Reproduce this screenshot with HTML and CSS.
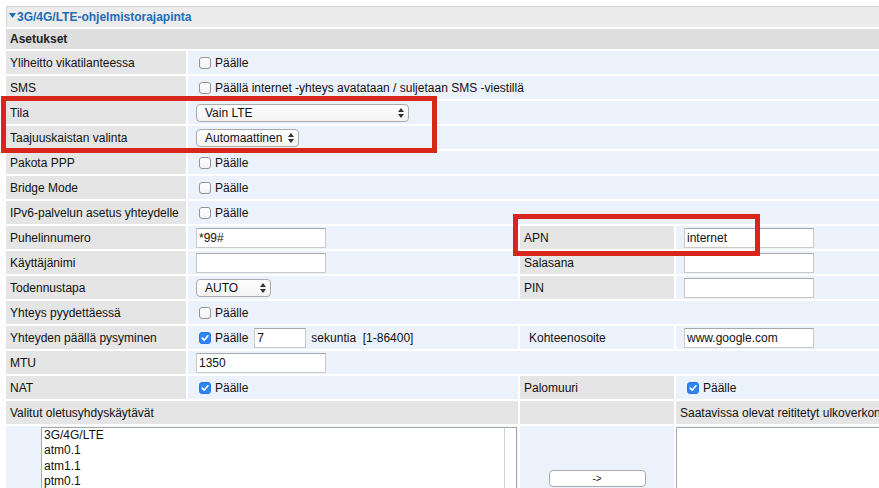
FILE: index.html
```html
<!DOCTYPE html>
<html lang="fi">
<head>
<meta charset="utf-8">
<title>3G/4G/LTE-ohjelmistorajapinta</title>
<link rel="stylesheet" href="styles.css">
</head>
<body>
<div class="page">
  <div class="panel-title">
    <svg class="caret" width="7" height="5" viewBox="0 0 7 5"><path d="M0 0H7L3.5 5Z" fill="#1b6db7"/></svg>
    <span>3G/4G/LTE-ohjelmistorajapinta</span>
  </div>
  <div class="grid">
    <div class="section">Asetukset</div>

    <div class="lbl">Yliheitto vikatilanteessa</div>
    <div class="val span3"><span class="cb"></span>Päälle</div>

    <div class="lbl">SMS</div>
    <div class="val span3"><span class="cb"></span>Päällä internet -yhteys avatataan / suljetaan SMS -viestillä</div>

    <div class="lbl">Tila</div>
    <div class="val span3"><span class="sel sel-wide"><span>Vain LTE</span><svg width="6" height="10" viewBox="0 0 6 10"><path d="M0 4L3 0L6 4Z M0 6L3 10L6 6Z" fill="#333"/></svg></span></div>

    <div class="lbl">Taajuuskaistan valinta</div>
    <div class="val span3"><span class="sel sel-mid"><span>Automaattinen</span><svg width="6" height="10" viewBox="0 0 6 10"><path d="M0 4L3 0L6 4Z M0 6L3 10L6 6Z" fill="#333"/></svg></span></div>

    <div class="lbl">Pakota PPP</div>
    <div class="val span3"><span class="cb"></span>Päälle</div>

    <div class="lbl">Bridge Mode</div>
    <div class="val span3"><span class="cb"></span>Päälle</div>

    <div class="lbl">IPv6-palvelun asetus yhteydelle</div>
    <div class="val span3"><span class="cb"></span>Päälle</div>

    <div class="lbl">Puhelinnumero</div>
    <div class="val"><input class="txt" type="text" value="*99#"></div>
    <div class="lbl">APN</div>
    <div class="val"><input class="txt" type="text" value="internet"></div>

    <div class="lbl">Käyttäjänimi</div>
    <div class="val"><input class="txt" type="text" value=""></div>
    <div class="lbl">Salasana</div>
    <div class="val"><input class="txt" type="password" value=""></div>

    <div class="lbl">Todennustapa</div>
    <div class="val"><span class="sel sel-narrow"><span>AUTO</span><svg width="6" height="10" viewBox="0 0 6 10"><path d="M0 4L3 0L6 4Z M0 6L3 10L6 6Z" fill="#333"/></svg></span></div>
    <div class="lbl">PIN</div>
    <div class="val"><input class="txt" type="text" value=""></div>

    <div class="lbl">Yhteys pyydettäessä</div>
    <div class="val span3"><span class="cb"></span>Päälle</div>

    <div class="lbl">Yhteyden päällä pysyminen</div>
    <div class="val"><span class="cb on"><svg width="10" height="10" viewBox="0 0 10 10"><path d="M2.2 5.2L4.2 7.2L7.9 2.8" fill="none" stroke="#fff" stroke-width="1.7" stroke-linecap="round" stroke-linejoin="round"/></svg></span>Päälle<input class="txt txt-short" type="text" value="7">sekuntia&nbsp;&nbsp;[1-86400]</div>
    <div class="val val-label">Kohteenosoite</div>
    <div class="val"><input class="txt" type="text" value="www.google.com"></div>

    <div class="lbl">MTU</div>
    <div class="val span3"><input class="txt" type="text" value="1350"></div>

    <div class="lbl">NAT</div>
    <div class="val"><span class="cb on"><svg width="10" height="10" viewBox="0 0 10 10"><path d="M2.2 5.2L4.2 7.2L7.9 2.8" fill="none" stroke="#fff" stroke-width="1.7" stroke-linecap="round" stroke-linejoin="round"/></svg></span>Päälle</div>
    <div class="lbl">Palomuuri</div>
    <div class="val"><span class="cb on"><svg width="10" height="10" viewBox="0 0 10 10"><path d="M2.2 5.2L4.2 7.2L7.9 2.8" fill="none" stroke="#fff" stroke-width="1.7" stroke-linecap="round" stroke-linejoin="round"/></svg></span>Päälle</div>

    <div class="lbl span2">Valitut oletusyhdyskäytävät</div>
    <div class="lbl"></div>
    <div class="lbl">Saatavissa olevat reititetyt ulkoverkon liitännät</div>

    <div class="val span2 list-cell">
      <div class="listbox">
        <div class="list-items">
          <div>3G/4G/LTE</div>
          <div>atm0.1</div>
          <div>atm1.1</div>
          <div>ptm0.1</div>
        </div>
        <div class="list-track"></div>
      </div>
    </div>
    <div class="val btn-cell"><button class="btn" type="button">-&gt;</button></div>
    <div class="val box-cell"><div class="box"></div></div>
  </div>

  <div class="mark mark-mode"></div>
  <div class="mark mark-apn"></div>
</div>
</body>
</html>
```
FILE: styles.css
```css
html, body {
  margin: 0;
  overflow: hidden;
  background: #fff;
}

body {
  font-family: "Liberation Sans", Arial, Helvetica, sans-serif;
  font-size: 12px;
  color: #111;
}

.page {
  position: relative;
  width: 1000px;
  padding: 6px 0 0 6px;
}

.panel-title {
  height: 20px;
  border-top: 1px solid #d4d4d4;
  border-left: 1px solid #d4d4d4;
  background: #ececec;
  color: #1b6db7;
  font-weight: bold;
  display: flex;
  align-items: center;
  padding-left: 2px;
}

.caret {
  margin-right: 1px;
  margin-top: -3px;
}

.grid {
  display: grid;
  grid-template-columns: 180px 330px 154px 320px;
  grid-template-rows: 20px repeat(15, 23px) 105px;
  gap: 2px;
  margin-top: 2px;
}

.section {
  grid-column: span 4;
  background: #dedede;
  font-weight: bold;
  color: #222;
  display: flex;
  align-items: center;
  padding-left: 4px;
}

.lbl {
  background: #e5e5e5;
  display: flex;
  align-items: center;
  padding-left: 4px;
  white-space: nowrap;
  overflow: hidden;
}

.val {
  background: #ebf2fb;
  display: flex;
  align-items: center;
  padding-left: 8px;
  white-space: nowrap;
}

.val-label {
  padding-left: 9px;
}

.span2 { grid-column: span 2; }
.span3 { grid-column: span 3; }

.cb {
  flex: none;
  width: 12px;
  height: 12px;
  box-sizing: border-box;
  border: 1px solid #949494;
  border-radius: 3px;
  background: linear-gradient(#ffffff, #f1f1f1);
  margin: 0 4px 0 3px;
  display: flex;
  align-items: center;
  justify-content: center;
}

.cb.on {
  background: #2f84f4;
  border-color: #2b76dc;
}

.txt {
  width: 130px;
  height: 20px;
  box-sizing: border-box;
  margin: 0;
  padding: 0 2px;
  border: 1px solid #c9c9c9;
  border-top-color: #a8a8a8;
  background: #fff;
  color: #111;
  font-family: "Liberation Sans", Arial, sans-serif;
  font-size: 12px;
  outline: none;
}

.txt-short {
  width: 52px;
  margin: 0 5px 0 6px;
}

.sel {
  display: inline-flex;
  align-items: center;
  justify-content: space-between;
  height: 18px;
  box-sizing: border-box;
  border: 1px solid #ababab;
  border-radius: 4px;
  background: linear-gradient(#ffffff, #f3f3f3);
  padding: 0 4px 0 8px;
  color: #111;
}

.sel-wide { width: 213px; }
.sel-mid { width: 103px; }
.sel-narrow { width: 75px; }

.list-cell {
  align-items: flex-start;
  padding: 1px 0 0 35px;
}

.listbox {
  width: 476px;
  height: 100px;
  box-sizing: border-box;
  border: 1px solid #a9a9a9;
  background: #fff;
  display: flex;
}

.list-items {
  flex: 1;
  padding: 0 0 0 2px;
  line-height: 15.3px;
  overflow: hidden;
}

.list-track {
  width: 11px;
  border-left: 1px solid #d0d0d0;
}

.btn-cell {
  justify-content: center;
  padding-left: 0;
}

.btn {
  width: 97px;
  height: 17px;
  box-sizing: border-box;
  border: 1px solid #ababab;
  border-radius: 4px;
  background: #fff;
  font-family: "Liberation Sans", Arial, sans-serif;
  font-size: 10px;
  color: #222;
  padding: 0;
  margin: 0;
}

.box-cell {
  align-items: flex-start;
  padding: 1px 0 0 0;
}

.box {
  width: 100%;
  height: 100px;
  box-sizing: border-box;
  border: 1px solid #a9a9a9;
  background: #fff;
}

.mark {
  position: absolute;
  box-sizing: border-box;
  border: 5px solid #d9261c;
}

.mark-mode {
  left: 1px;
  top: 96px;
  width: 436px;
  height: 57px;
}

.mark-apn {
  left: 513px;
  top: 214px;
  width: 247px;
  height: 42px;
}
```
